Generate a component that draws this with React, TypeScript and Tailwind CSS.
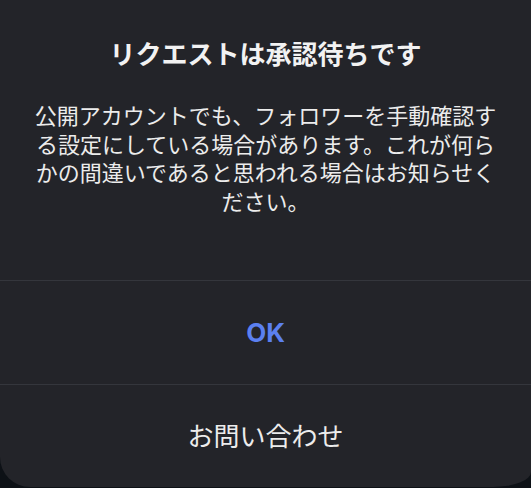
export default function App() {
  return (
    <div
      className="h-[488px] w-[531px] overflow-hidden bg-[#0d1116]"
      style={{ fontFamily: '"Inter", "Noto Sans CJK JP", sans-serif' }}
    >
      <div className="flex h-[487px] flex-col rounded-bl-[30px] rounded-br-[38px_15px] bg-[#232429]">
        <div className="flex h-[280px] flex-col items-center px-[30px] pt-[39px]">
          <h2 className="text-[26px] font-bold leading-[32px] text-[#f2f2f2]">
            リクエストは承認待ちです
          </h2>
          <p className="mt-[31px] text-center text-[22px] leading-[28.5px] text-[#ececec]">
            公開アカウントでも、フォロワーを手動確認す
            <br />
            る設定にしている場合があります。これが何ら
            <br />
            かの間違いであると思われる場合はお知らせく
            <br />
            ださい。
          </p>
        </div>
        <div className="h-px bg-[#34363c]" />
        <button className="flex h-[103px] items-center justify-center text-[26px] font-bold text-[#5b80f0]">
          OK
        </button>
        <div className="h-px bg-[#34363c]" />
        <button className="flex flex-1 items-center justify-center text-[26px] text-[#ececec]">
          お問い合わせ
        </button>
      </div>
    </div>
  )
}
